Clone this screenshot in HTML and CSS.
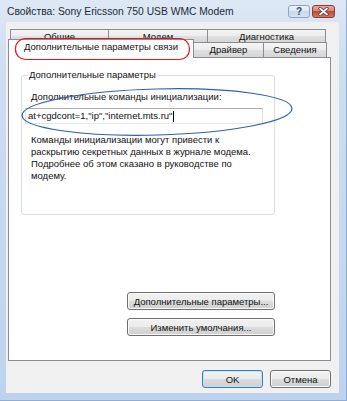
FILE: index.html
```html
<!DOCTYPE html>
<html lang="ru">
<head>
    <meta charset="UTF-8">
    <title>Свойства: Sony Ericsson 750 USB WMC Modem</title>
    <link rel="stylesheet" href="styles.css">
</head>
<body>

    <div class="window">
        <div class="titlebar">
            <span class="title">Свойства: Sony Ericsson 750 USB WMC Modem</span>
            <div class="caption-buttons">
                <span class="cap-btn help">?</span>
                <span class="cap-btn close">
                    <svg width="11" height="9" viewBox="0 0 11 9">
                        <path d="M2 1.5 L9 7.5 M9 1.5 L2 7.5" stroke="#5a2a24" stroke-width="3.2" stroke-linecap="round"/>
                        <path d="M2 1.5 L9 7.5 M9 1.5 L2 7.5" stroke="#fff" stroke-width="1.8" stroke-linecap="round"/>
                    </svg>
                </span>
            </div>
        </div>

        <div class="client">
            <!-- вкладки в два ряда -->
            <div class="tabs">
                <div class="tab-row back">
                    <div class="tab tab-general">Общие</div>
                    <div class="tab tab-modem">Модем</div>
                    <div class="tab tab-diag">Диагностика</div>
                </div>
                <div class="tab-row front">
                    <div class="tab active tab-adv">Дополнительные параметры связи</div>
                    <div class="tab tab-driver">Драйвер</div>
                    <div class="tab tab-info">Сведения</div>
                </div>
            </div>

            <div class="panel">
                <div class="group">
                    <div class="group-title">Дополнительные параметры</div>
                    <div class="field-label">Дополнительные команды инициализации:</div>
                    <div class="textbox">at+cgdcont=1,"ip","internet.mts.ru"<span class="caret"></span></div>
                    <p class="note">Команды инициализации могут привести к<br>раскрытию секретных данных в журнале модема.<br>Подробнее об этом сказано в руководстве по<br>модему.</p>
                </div>

                <div class="panel-buttons">
                    <button class="btn wide">Дополнительные параметры...</button>
                    <button class="btn wide">Изменить умолчания...</button>
                </div>
            </div>

            <div class="dialog-buttons">
                <button class="btn default">OK</button>
                <button class="btn">Отмена</button>
            </div>
        </div>

        <!-- пометки поверх окна -->
        <svg class="marks" width="347" height="401" viewBox="0 0 347 401">
            <rect x="15.5" y="38.5" width="174" height="21" rx="10" fill="none" stroke="#e4161a" stroke-width="1.2"/>
            <ellipse cx="157" cy="112" rx="135" ry="23" fill="none" stroke="#2d62a6" stroke-width="1.2" transform="rotate(-1.5 157 112)"/>
        </svg>
    </div>

</body>
</html>
```

FILE: styles.css
```css
* {
    margin: 0;
    padding: 0;
    box-sizing: border-box;
}

body {
    font-family: 'Liberation Sans', Arial, sans-serif;
    font-size: 9.5px;
    color: #111;
    background-color: #fff;
}

.window {
    position: relative;
    width: 347px;
    height: 401px;
    display: flex;
    flex-direction: column;
    background: linear-gradient(to bottom, #dee8f5 0, #cfdef1 60px, #bdd3ed 100%);
    border-right: 1px solid #8eadd6;
    border-bottom: 1px solid #8eadd6;
}

/* заголовок окна */
.titlebar {
    height: 22px;
    display: flex;
    align-items: center;
    justify-content: space-between;
    padding: 1px 11px 0 7px;
}

.title {
    font-size: 10.3px;
    color: #1f2a36;
}

.caption-buttons {
    display: flex;
    gap: 2px;
}

.cap-btn {
    height: 13px;
    border-radius: 3px;
    display: flex;
    align-items: center;
    justify-content: center;
}

.cap-btn.help {
    width: 22px;
    border: 1px solid #8ea4c2;
    background: linear-gradient(to bottom, #eef3fa 0%, #dbe6f4 50%, #c8d8ed 50%, #d6e3f3 100%);
    color: #35465e;
    font-size: 10px;
    font-weight: bold;
}

.cap-btn.close {
    width: 23px;
    border: 1px solid #8e3c32;
    background: linear-gradient(to bottom, #e7a99f 0%, #d77e70 50%, #c2493a 50%, #d2776a 100%);
}

/* рабочая область */
.client {
    flex: 1;
    margin: 0 7px 7px 6px;
    padding-top: 7px;
    background-color: #f0f0f0;
}

.tabs {
    margin-left: 2px;
    width: 323px;
}

.tab-row {
    display: flex;
}

.tab-row.back {
    height: 13px;
    padding-left: 2px;
}

.tab-row.front {
    height: 15px;
}

.tab {
    height: 100%;
    border: 1px solid #898c95;
    border-bottom: none;
    background: linear-gradient(to bottom, #f4f4f4 0%, #ececec 50%, #e0e0e0 50%, #d6d6d6 100%);
    text-align: center;
    line-height: 13px;
    color: #111;
    white-space: nowrap;
    overflow: hidden;
}

.tab + .tab {
    margin-left: -1px;
}

.tab-row.front .tab {
    line-height: 14px;
}

.tab-general { width: 99px; }
.tab-modem { width: 100px; }
.tab-diag { width: 119px; }
.tab-driver { width: 71px; }
.tab-info { width: 64px; }

.tab.active {
    position: relative;
    z-index: 2;
    width: 186px;
    height: 19px;
    margin-top: -3px;
    background: #fff;
    line-height: 18px;
}

/* страница вкладки */
.panel {
    margin-left: 2px;
    width: 323px;
    height: 304px;
    border: 1px solid #898c95;
    background-color: #fff;
    padding-top: 17px;
}

.group {
    margin-left: 12px;
    width: 254px;
    height: 140px;
    border: 1px solid #d5dfe5;
    border-radius: 3px;
    padding-left: 3px;
}

.group-title {
    width: fit-content;
    margin: -7px 0 0 3px;
    padding: 0 1px;
    line-height: 12px;
    background-color: #fff;
}

.field-label {
    margin: 10px 0 0 6px;
    line-height: 12px;
}

.textbox {
    margin-top: 5px;
    width: 238px;
    height: 16px;
    border: 1px solid #dbdfe6;
    border-top-color: #abadb3;
    border-bottom-color: #e3e9ef;
    padding-left: 2px;
    line-height: 14px;
    display: flex;
    align-items: center;
}

.caret {
    width: 1px;
    height: 11px;
    margin-left: 1px;
    background-color: #000;
}

.note {
    margin: 10px 0 0 6px;
    line-height: 12px;
}

.panel-buttons {
    margin: 77px 0 0 12px;
    width: 254px;
    display: flex;
    flex-direction: column;
    align-items: flex-end;
    gap: 8px;
}

/* кнопки */
.btn {
    height: 18px;
    width: 61px;
    border: 1px solid #707070;
    border-radius: 3px;
    background: linear-gradient(to bottom, #f2f2f2 0%, #ebebeb 50%, #dddddd 50%, #cfcfcf 100%);
    box-shadow: inset 0 0 0 1px #fafafa;
    font-family: 'Liberation Sans', Arial, sans-serif;
    font-size: 9.5px;
    color: #111;
    cursor: pointer;
}

.btn.wide {
    width: 148px;
}

.btn.default {
    border-color: #3c7fb1;
    box-shadow: inset 0 0 0 1px #bfe3f7;
}

.dialog-buttons {
    margin: 9px 0 0 2px;
    width: 323px;
    display: flex;
    justify-content: flex-end;
    gap: 7px;
}

.marks {
    position: absolute;
    z-index: 5;
    top: 0;
    left: 0;
    pointer-events: none;
}
```
